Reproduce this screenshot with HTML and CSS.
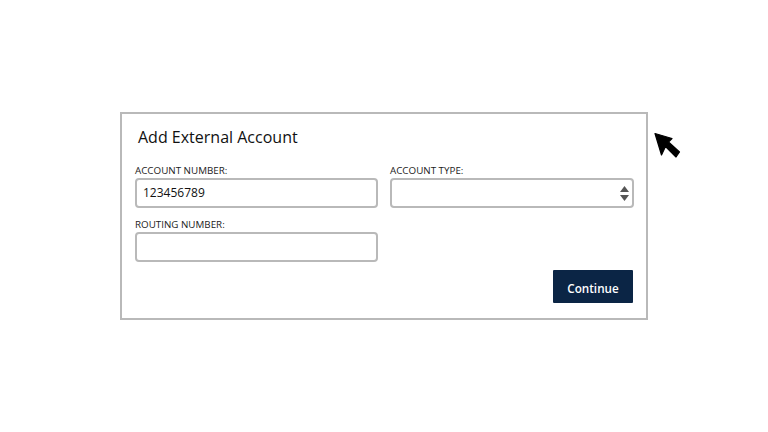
FILE: index.html
```html
<!DOCTYPE html>
<html lang="en">

<head>
    <meta charset="UTF-8">
    <meta name="viewport" content="width=device-width, initial-scale=1.0">
    <title>Add External Account</title>
    <link rel="stylesheet" href="styles.css">
</head>

<body>
    <div class="card">
        <h2 class="cardTitle">Add External Account</h2>
        <div class="fields">
            <div class="field">
                <label class="fieldLabel">ACCOUNT NUMBER:</label>
                <div class="box boxValue">123456789</div>
            </div>
            <div class="field">
                <label class="fieldLabel">ACCOUNT TYPE:</label>
                <div class="box boxSelect">
                    <svg class="spinner" width="9" height="15" viewBox="0 0 9 15">
                        <path d="M4.5 0 L9 6 H0 Z" fill="#555" />
                        <path d="M0 9 H9 L4.5 15 Z" fill="#555" />
                    </svg>
                </div>
            </div>
            <div class="field">
                <label class="fieldLabel">ROUTING NUMBER:</label>
                <div class="box"></div>
            </div>
        </div>
        <div class="actions">
            <button class="btnContinue">Continue</button>
        </div>
    </div>
    <svg class="cursor" width="27" height="27" viewBox="0 0 27 27">
        <path d="M1 1.5 L18 6.5 L14.5 10 L25.5 20 L22 25 L11.5 14.5 L7.5 23 Z" fill="#000" stroke="#000" stroke-width="1.2" stroke-linejoin="round" />
    </svg>
</body>

</html>
```

FILE: styles.css
```css
body {
    margin: 0;
    padding: 112px 0 0 120px;
    background: #fff;
    font-family: "Open Sans", "Noto Sans", sans-serif;
    color: #111;
}
.card {
    width: 528px;
    height: 208px;
    box-sizing: border-box;
    border: 2px solid #b9b9b9;
    padding: 12px 12px 15px 13px;
    display: flex;
    flex-direction: column;
}
.cardTitle {
    margin: 0 0 15px 3px;
    font-size: 16px;
    line-height: 22px;
    font-weight: 400;
}
.fields {
    display: grid;
    grid-template-columns: 243px 244px;
    column-gap: 12px;
    row-gap: 9px;
}
.field {
    display: flex;
    flex-direction: column;
}
.fieldLabel {
    font-size: 9.8px;
    line-height: 15px;
    color: #222;
}
.box {
    height: 30px;
    box-sizing: border-box;
    border: 2px solid #b9b9b9;
    border-radius: 4px;
    background: #fff;
}
.boxValue {
    padding-left: 6px;
    font-size: 12px;
    line-height: 25px;
}
.boxSelect {
    display: flex;
    justify-content: flex-end;
    align-items: center;
    padding-right: 3px;
}
.actions {
    margin-top: auto;
    display: flex;
    justify-content: flex-end;
    padding-right: 1px;
}
.btnContinue {
    width: 80px;
    height: 33px;
    padding: 2px 0 0;
    border: none;
    border-radius: 1px;
    background: #0b2545;
    color: #fff;
    font-family: inherit;
    font-size: 11.7px;
    font-weight: 600;
}
.cursor {
    position: absolute;
    left: 654px;
    top: 132px;
}
```
